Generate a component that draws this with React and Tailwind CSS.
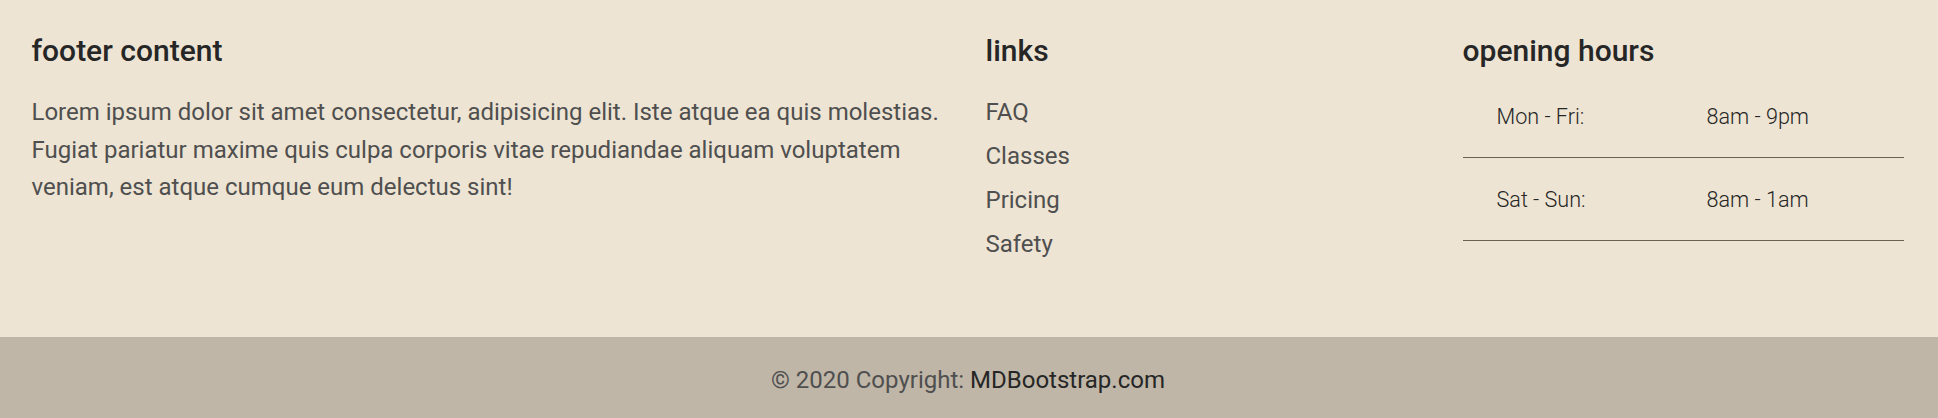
export default function App() {
  const font = { fontFamily: 'Roboto, "Liberation Sans", sans-serif' };
  return (
    <div style={font} className="w-[1938px] h-[418px] overflow-hidden bg-[#ede4d3]">
      <div className="flex pl-[13.5px] pt-[33px] h-[337px]">
        <div className="w-[954px] px-[18px]">
          <h5 className="text-[30px] leading-[36px] font-medium text-[#262626] mb-[25px]">footer content</h5>
          <p className="text-[24px] leading-[37.5px] text-[#4f4f4f]">
            Lorem ipsum dolor sit amet consectetur, adipisicing elit. Iste atque ea quis molestias.
            Fugiat pariatur maxime quis culpa corporis vitae repudiandae aliquam voluptatem
            veniam, est atque cumque eum delectus sint!
          </p>
        </div>
        <div className="w-[477px] px-[18px]">
          <h5 className="text-[30px] leading-[36px] font-medium text-[#262626] mb-[25px]">links</h5>
          <ul className="text-[24px] leading-[37.5px] text-[#4f4f4f] flex flex-col gap-[6.5px]">
            <li>FAQ</li>
            <li>Classes</li>
            <li>Pricing</li>
            <li>Safety</li>
          </ul>
        </div>
        <div className="w-[477.5px] px-[18px]">
          <h5 className="text-[30px] leading-[36px] font-medium text-[#262626] mb-[5px]">opening hours</h5>
          <div className="text-[21.6px] leading-[34.5px] font-light text-[#262626]">
            <div className="grid grid-cols-[210px_1fr] border-b border-[#6b6256]">
              <div className="px-[34px] pt-[25.5px] pb-[22.5px]">Mon - Fri:</div>
              <div className="px-[34px] pt-[25.5px] pb-[22.5px]">8am - 9pm</div>
            </div>
            <div className="grid grid-cols-[210px_1fr] border-b border-[#6b6256]">
              <div className="px-[34px] pt-[25.5px] pb-[22.5px]">Sat - Sun:</div>
              <div className="px-[34px] pt-[25.5px] pb-[22.5px]">8am - 1am</div>
            </div>
          </div>
        </div>
      </div>
      <div className="bg-[#bfb6a7] pt-[24px] pb-[24px] pr-[2px] text-center text-[24px] leading-[38.4px] text-[#4f4f4f]">
        © 2020 Copyright: <a className="text-[#262626]">MDBootstrap.com</a>
      </div>
    </div>
  );
}
